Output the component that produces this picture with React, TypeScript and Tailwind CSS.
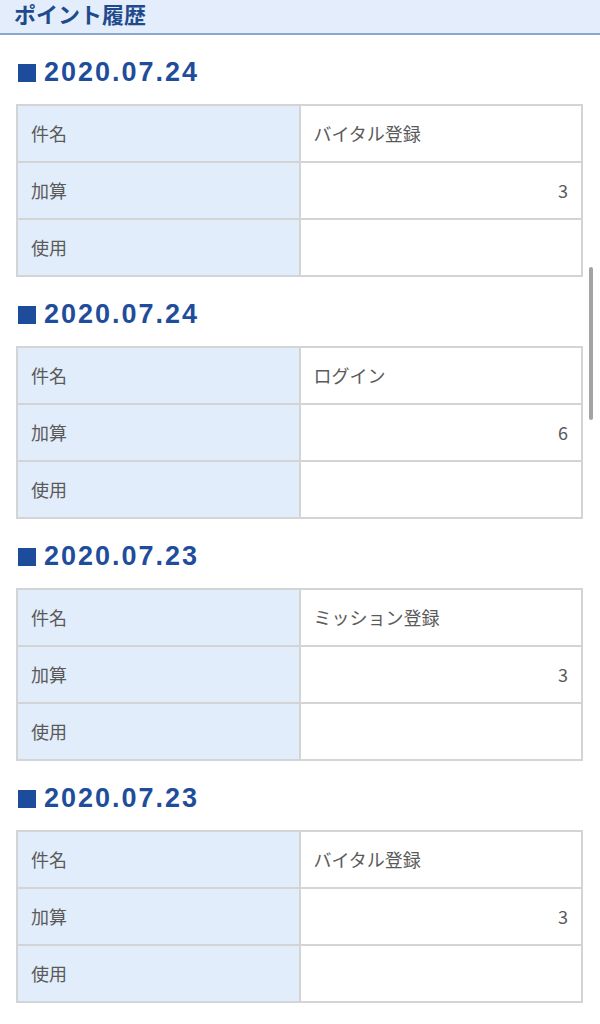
const entries = [
  { date: '2020.07.24', title: 'バイタル登録', add: '3', use: '' },
  { date: '2020.07.24', title: 'ログイン', add: '6', use: '' },
  { date: '2020.07.23', title: 'ミッション登録', add: '3', use: '' },
  { date: '2020.07.23', title: 'バイタル登録', add: '3', use: '' },
];

const jp = { fontFamily: '"Noto Sans CJK JP", "Noto Sans", sans-serif' };

function HistoryTable({ title, add, use }: { title: string; add: string; use: string }) {
  const rows = [
    { label: '件名', value: title, right: false },
    { label: '加算', value: add, right: true },
    { label: '使用', value: use, right: true },
  ];
  return (
    <div className="grid grid-cols-2 gap-[2px] bg-[#d3d4d6] p-[2px]">
      {rows.map((row) => (
        <div key={row.label} className="contents">
          <div className="h-[55px] flex items-center bg-[#e2edfb] px-[13px] text-[18px] text-[#5a5a5a]">
            {row.label}
          </div>
          <div
            className={`h-[55px] flex items-center bg-white px-[13px] text-[18px] text-[#5a5a5a] ${
              row.right ? 'justify-end' : 'justify-start'
            }`}
          >
            {row.value}
          </div>
        </div>
      ))}
    </div>
  );
}

export default function App() {
  return (
    <div className="relative min-h-[1024px] bg-white" style={jp}>
      {/* Header */}
      <div className="h-[35px] bg-[#e3edfb] border-b-2 border-[#8aa7d2] flex items-start px-[14px]">
        <h1 className="text-[22px] leading-[26px] font-bold text-[#1f4a8b]">ポイント履歴</h1>
      </div>

      {/* History list */}
      <div className="pl-[16px] pr-[17px]">
        {entries.map((entry, i) => (
          <section key={i}>
            <div className="h-[69px] flex items-center pt-[6px] gap-[8px] pl-[2px]">
              <div className="w-[18px] h-[18px] bg-[#1e4c9c]" />
              <span
                className="text-[27px] font-bold tracking-[2px] text-[#1f4d9b] leading-none"
                style={{ fontFamily: '"Liberation Sans", Arial, sans-serif' }}
              >
                {entry.date}
              </span>
            </div>
            <HistoryTable title={entry.title} add={entry.add} use={entry.use} />
          </section>
        ))}
      </div>

      {/* Scroll indicator */}
      <div className="absolute left-[589px] top-[267px] w-[4px] h-[153px] rounded-full bg-[#a3a3a3]" />
    </div>
  );
}
